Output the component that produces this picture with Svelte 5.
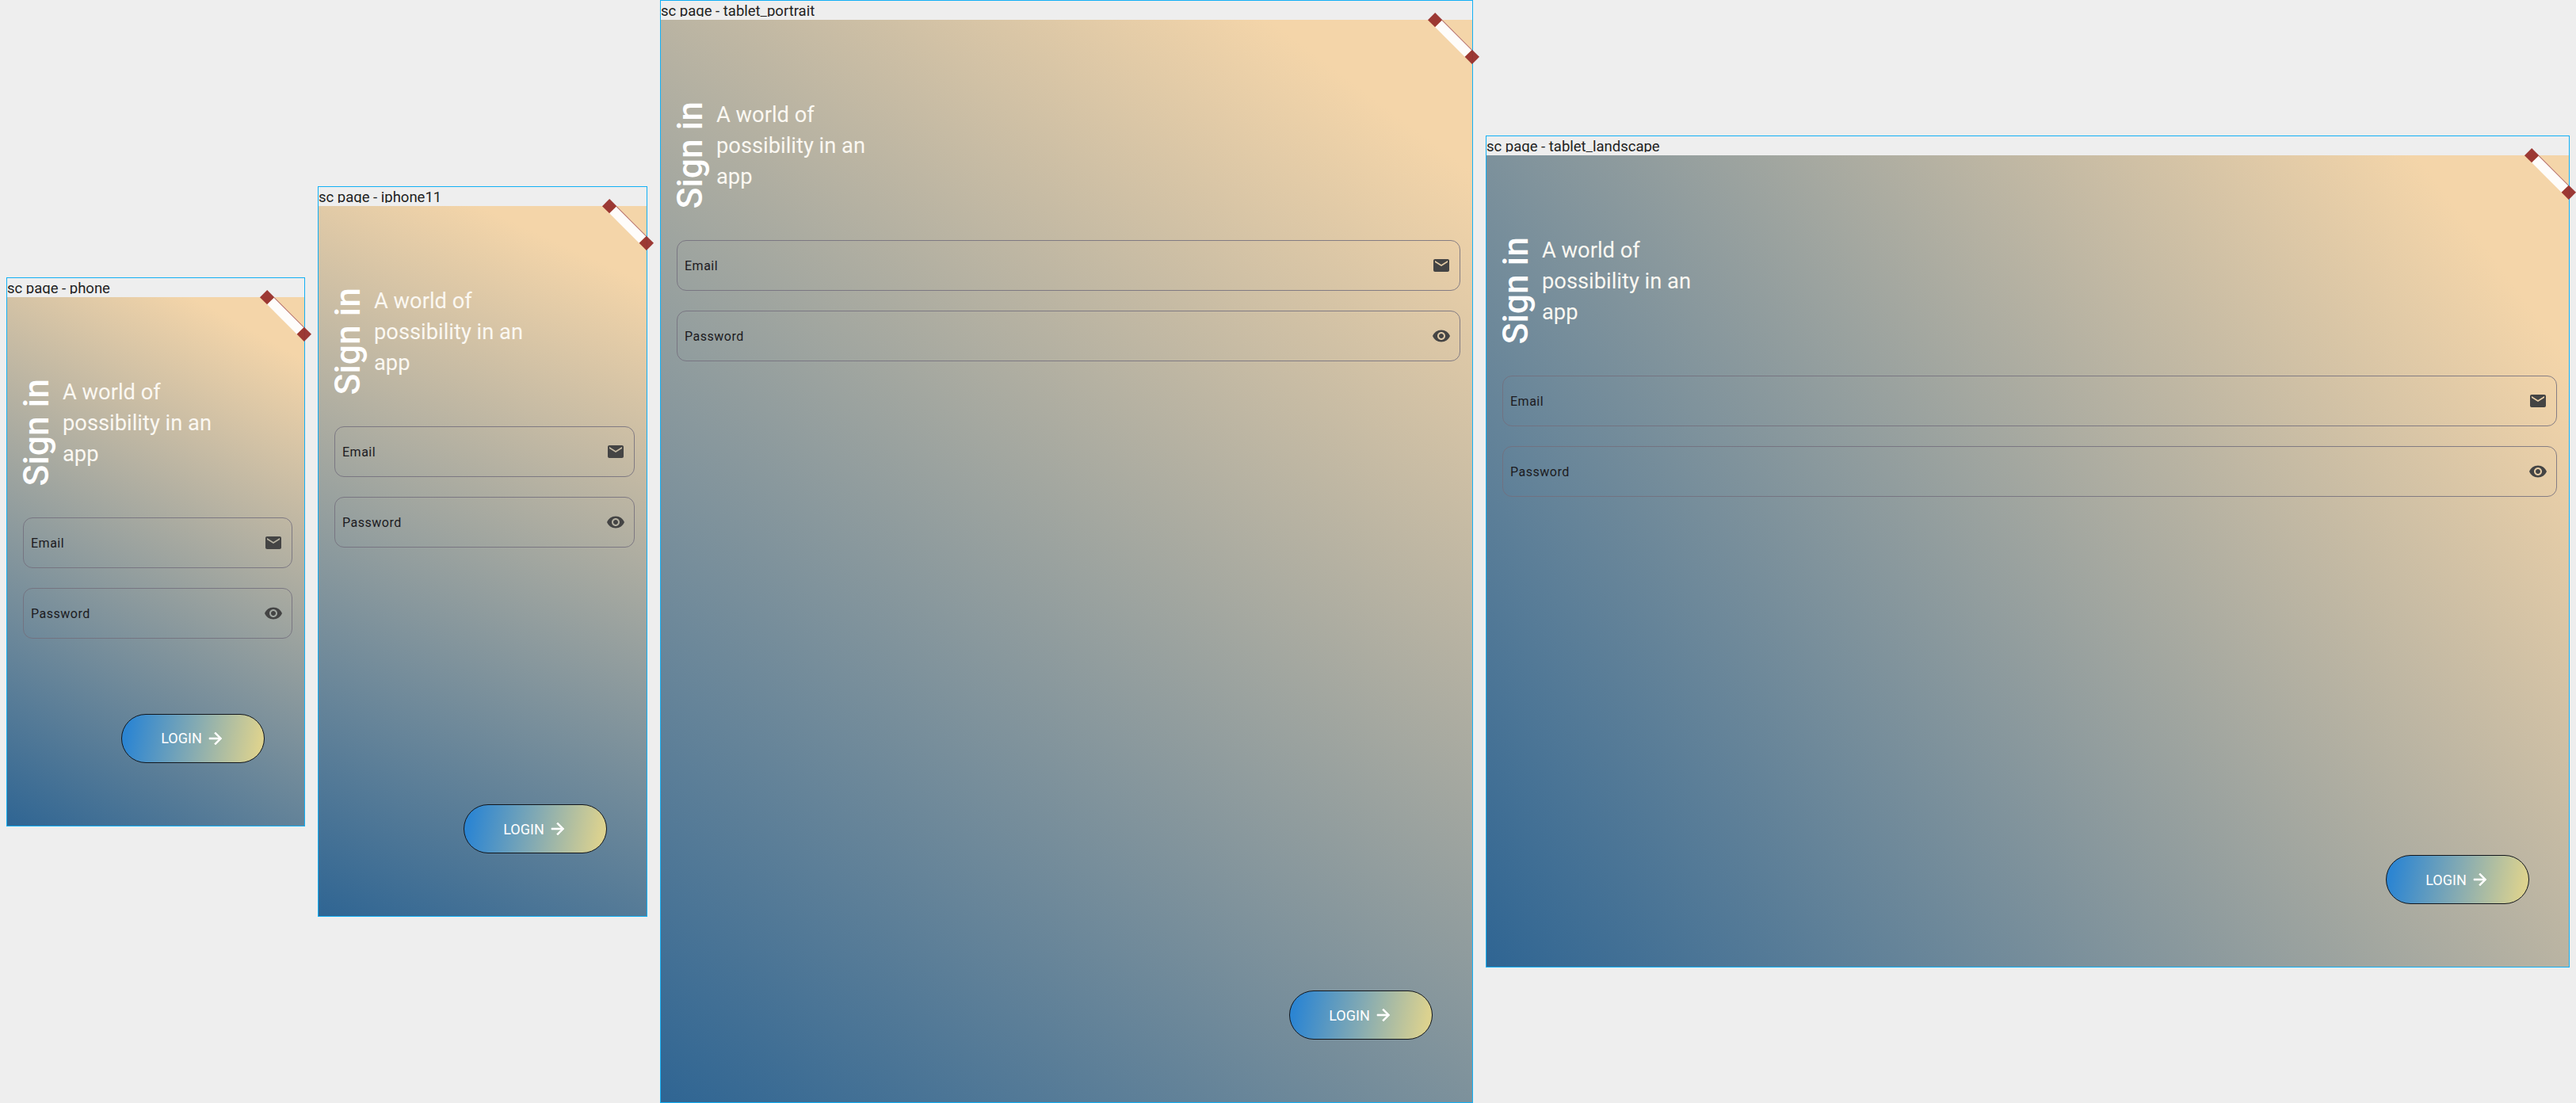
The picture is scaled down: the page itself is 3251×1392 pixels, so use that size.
<script>
	const pages = [
		{ name: 'phone', width: 375, height: 667 },
		{ name: 'iphone11', width: 414, height: 896 },
		{ name: 'tablet_portrait', width: 1024, height: 1366 },
		{ name: 'tablet_landscape', width: 1366, height: 1024 }
	];

	// the background runs corner to corner, so its angle depends on the page size
	const cornerAngle = (page) => (Math.atan2(page.width, page.height) * 180) / Math.PI;
</script>

<div class="canvas">
	{#each pages as page}
		<section class="frame">
			<div class="frame__label">sc page - {page.name}</div>
			<div
				class="screen"
				style="width: {page.width}px; height: {page.height}px; --angle: {cornerAngle(page)}deg"
			>
				<div class="ribbon" aria-hidden="true">
					<span class="ribbon__end"></span>
					<span class="ribbon__bar"></span>
					<span class="ribbon__end"></span>
				</div>

				<header class="hero">
					<h1 class="hero__title">Sign in</h1>
					<p class="hero__text">A world of possibility in an app</p>
				</header>

				<form class="form">
					<div class="field">
						<span class="field__label">Email</span>
						<svg class="field__icon" viewBox="0 0 24 24" width="24" height="24">
							<path d="M20 4H4c-1.1 0-1.99.9-1.99 2L2 18c0 1.1.9 2 2 2h16c1.1 0 2-.9 2-2V6c0-1.1-.9-2-2-2zm0 4l-8 5-8-5V6l8 5 8-5v2z" />
						</svg>
					</div>
					<div class="field">
						<span class="field__label">Password</span>
						<svg class="field__icon" viewBox="0 0 24 24" width="24" height="24">
							<path d="M12 4.5C7 4.5 2.73 7.61 1 12c1.73 4.39 6 7.5 11 7.5s9.27-3.11 11-7.5c-1.73-4.39-6-7.5-11-7.5zM12 17c-2.76 0-5-2.24-5-5s2.24-5 5-5 5 2.24 5 5-2.24 5-5 5zm0-8c-1.66 0-3 1.34-3 3s1.34 3 3 3 3-1.34 3-3-1.34-3-3-3z" />
						</svg>
					</div>
				</form>

				<button class="login" type="button">
					<span>LOGIN</span>
					<svg viewBox="0 0 24 24" width="24" height="24">
						<path d="M12 4l-1.41 1.41L16.17 11H4v2h12.17l-5.58 5.59L12 20l8-8z" />
					</svg>
				</button>
			</div>
		</section>
	{/each}
</div>

<style>
	:global(body) {
		margin: 0;
		background: #eeeeee;
	}

	.canvas {
		display: flex;
		align-items: center;
		gap: 16px;
		height: 1392px;
		padding-left: 8px;
		box-sizing: border-box;
		background: #eeeeee;
		font-family: Roboto, 'Liberation Sans', sans-serif;
	}

	.frame {
		flex: none;
		border: 1px solid #12b0f5;
		background: #eeeeee;
	}

	.frame__label {
		height: 20px;
		margin-bottom: 4px;
		overflow: hidden;
		font-size: 18.5px;
		line-height: 26px;
		color: #222222;
	}

	.screen {
		position: relative;
		display: flex;
		flex-direction: column;
		background: linear-gradient(var(--angle), #2f6593 0%, #f4d5a9 91%);
	}

	.ribbon {
		position: absolute;
		top: 17px;
		right: -16px;
		display: flex;
		width: 79px;
		height: 13px;
		transform: rotate(45deg);
		opacity: 0.95;
	}

	.ribbon__end {
		flex: none;
		width: 13px;
		background: #98302c;
	}

	.ribbon__bar {
		flex: 1;
		box-sizing: border-box;
		background: #ffffff;
		border-top: 1px solid #a8524a;
	}

	.hero {
		display: flex;
		align-items: flex-start;
		gap: 7px;
		padding: 100px 0 0 11px;
	}

	.hero__title {
		margin: 3px 0 0;
		writing-mode: vertical-rl;
		transform: rotate(180deg);
		font-size: 44.5px;
		line-height: 52px;
		font-weight: 500;
		color: #ffffff;
	}

	.hero__text {
		width: 210px;
		margin: 1px 0 0;
		font-size: 27.3px;
		line-height: 39px;
		color: #fbf8f2;
	}

	.form {
		display: flex;
		flex-direction: column;
		gap: 25px;
		margin: 40px 15px 0 20px;
	}

	.field {
		display: flex;
		align-items: center;
		justify-content: space-between;
		box-sizing: border-box;
		height: 64px;
		padding: 0 11px 0 9px;
		border: 1px solid rgba(115, 110, 125, 0.85);
		border-radius: 12px;
	}

	.field__label {
		padding-top: 1px;
		font-size: 16px;
		letter-spacing: 0.5px;
		color: #1c1b1f;
	}

	.field__icon {
		fill: #444444;
	}

	.login {
		display: flex;
		align-items: center;
		justify-content: center;
		gap: 5px;
		align-self: flex-end;
		box-sizing: border-box;
		width: 181px;
		height: 62px;
		margin: auto 50px 79px 0;
		padding: 0;
		border: 1.5px solid #12161c;
		border-radius: 31px;
		background: linear-gradient(100deg, #2c85d2 5%, #83aab3 50%, #dcd28f 95%);
		font-family: inherit;
		font-size: 18px;
		font-weight: 400;
		color: #ffffff;
	}

	.login svg {
		fill: #ffffff;
		stroke: #ffffff;
		stroke-width: 0.6;
	}
</style>
